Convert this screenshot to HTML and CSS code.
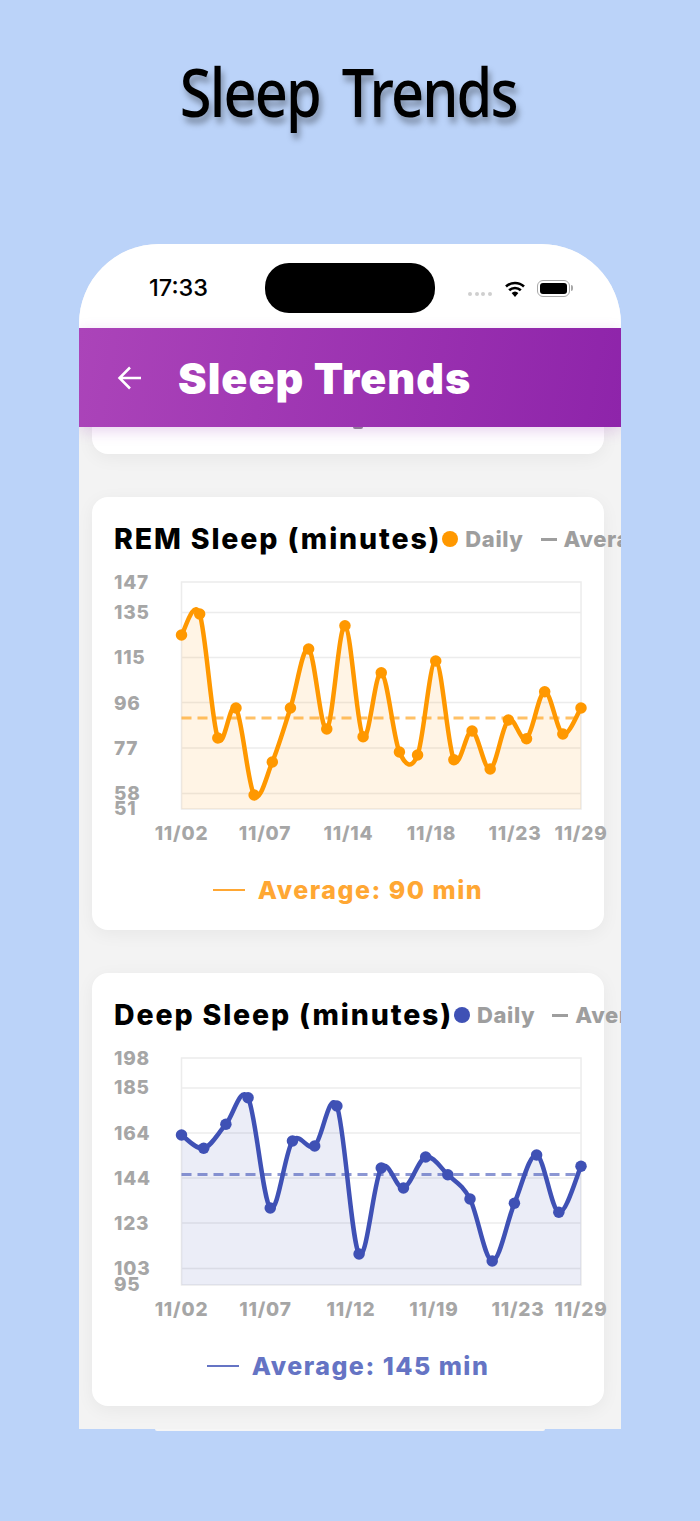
FILE: index.html
```html
<!DOCTYPE html>
<html lang="en">
<head>
<meta charset="utf-8">
<title>Sleep Trends</title>
<link rel="stylesheet" href="styles.css">
</head>
<body>
<h1 class="hero">Sleep Trends</h1>
<main class="phone">
  <div class="status">
    <span class="time">17:33</span>
    <span class="island"></span>
    <div class="status-icons">
      <span class="signal"><i></i><i></i><i></i><i></i></span>
      <svg class="wifi" width="22" height="17" viewBox="0 0 22 17"><path d="M11 17l-3.4-4a5 5 0 0 1 6.800 0z" fill="#000"/><path d="M5.200 10.300a8.400 8.400 0 0 1 11.600 0M2 6.500a13.200 13.200 0 0 1 18 0" fill="none" stroke="#000" stroke-width="2.600"/></svg>
      <span class="battery"><span class="battery-fill"></span></span>
    </div>
  </div>
  <header class="appbar">
    <svg class="back" width="26" height="26" viewBox="0 0 26 26"><path d="M24 13H3M13 2.500L2.500 13 13 23.500" fill="none" stroke="#fff" stroke-width="2.500"/></svg>
    <span class="appbar-title">Sleep Trends</span>
  </header>
  <div class="content">
    <section class="card card-cut"><span class="peek"></span></section>
    <section class="card">
      <div class="card-head">
        <h2 class="card-title">REM Sleep (minutes)</h2>
        <span class="dot dot-orange"></span><span class="legend">Daily</span>
        <span class="dash"></span><span class="legend">Average</span>
      </div>
      <svg class="chart" id="rem" width="512" height="270" viewBox="0 0 512 270"></svg>
      <div class="avg avg-orange"><span class="avg-line"></span>Average: 90 min</div>
    </section>
    <section class="card">
      <div class="card-head">
        <h2 class="card-title">Deep Sleep (minutes)</h2>
        <span class="dot dot-indigo"></span><span class="legend">Daily</span>
        <span class="dash"></span><span class="legend">Average</span>
      </div>
      <svg class="chart" id="deep" width="512" height="270" viewBox="0 0 512 270"></svg>
      <div class="avg avg-indigo"><span class="avg-line"></span>Average: 145 min</div>
    </section>
  </div>
</main>
<script src="charts.js"></script>
</body>
</html>
```
FILE: styles.css
```css
* { box-sizing: border-box; }
html, body { margin: 0; padding: 0; }
body {
  width: 700px;
  height: 1521px;
  overflow: hidden;
  background: #bbd3f9;
  font-family: Inter, "Liberation Sans", sans-serif;
}
.hero {
  height: 244px;
  margin: 0;
  padding: 49px 4px 0 0;
  font-family: "Noto Sans", sans-serif;
  font-size: 68px;
  line-height: 84px;
  font-weight: 500;
  letter-spacing: -2.200px;
  word-spacing: 10px;
  text-align: center;
  color: #000;
  white-space: nowrap;
  transform: scaleX(.85);
  text-shadow: 3px 6px 7px rgba(0,0,0,.35);
}
.phone {
  position: relative;
  width: 542px;
  height: 1187px;
  margin: 0 auto;
  background: linear-gradient(#f3f3f3 calc(100% - 2px), transparent 0);
  border-radius: 80px 80px 0 0;
  overflow: hidden;
}
.phone::after {
  content: "";
  position: absolute;
  left: 76px;
  right: 76px;
  bottom: 0;
  height: 2px;
  border-radius: 0 0 8px 8px;
  background: #f6f6f6;
}
.status {
  position: relative;
  height: 84px;
  background: #fff;
}
.time {
  position: absolute;
  left: 70px;
  top: 30px;
  font-size: 23.500px;
  line-height: 28px;
  font-weight: 500;
  color: #000;
}
.island {
  position: absolute;
  left: 186px;
  top: 19px;
  width: 170px;
  height: 50px;
  border-radius: 24px;
  background: #000;
}
.status-icons {
  position: absolute;
  left: 389px;
  top: 36px;
  display: flex;
  align-items: flex-start;
}
.signal {
  display: flex;
  gap: 2.600px;
  margin-top: 12px;
  margin-right: 12px;
}
.signal i {
  display: block;
  width: 4px;
  height: 4px;
  border-radius: 2px;
  background: #cfcfcf;
}
.wifi { margin-right: 11px; }
.battery {
  position: relative;
  display: block;
  width: 33px;
  height: 17px;
  padding: 2px;
  border: 1.500px solid #a8a8a8;
  border-radius: 6px;
}
.battery::after {
  content: "";
  position: absolute;
  right: -4px;
  top: 4px;
  width: 2px;
  height: 6px;
  border-radius: 0 2px 2px 0;
  background: #a8a8a8;
}
.battery-fill {
  display: block;
  height: 100%;
  border-radius: 3px;
  background: #000;
}
.appbar {
  position: relative;
  z-index: 2;
  display: flex;
  align-items: center;
  height: 99px;
  padding-left: 38px;
  background: linear-gradient(100deg, #ab44b9 0%, #8e24aa 100%);
  box-shadow: 0 4px 14px rgba(142,36,170,.2);
}
.back { flex: none; }
.appbar-title {
  margin-left: 35px;
  padding-top: 1px;
  font-size: 43px;
  line-height: 50px;
  font-weight: 900;
  letter-spacing: 1px;
  color: #fff;
}
.content {
  display: flex;
  flex-direction: column;
  gap: 43px;
  padding: 0 17px 0 13px;
}
.card {
  position: relative;
  flex: none;
  width: 512px;
  height: 433px;
  background: #fff;
  border-radius: 16px;
  box-shadow: 0 4px 18px rgba(0,0,0,.05);
}
.card-cut {
  height: 27px;
  border-radius: 0 0 16px 16px;
}
.peek {
  position: absolute;
  left: 261px;
  top: 0;
  width: 10px;
  height: 2px;
  border-radius: 0 0 5px 5px;
  background: #8f8596;
}
.card-head {
  display: flex;
  align-items: center;
  height: 75px;
  padding: 9px 0 0 22px;
  white-space: nowrap;
}
.card-title {
  margin: 0;
  flex: none;
  font-size: 28.500px;
  line-height: 34px;
  font-weight: 800;
  letter-spacing: 1.850px;
  color: #000;
}
.dot {
  flex: none;
  width: 16px;
  height: 16px;
  margin-left: 1px;
  border-radius: 50%;
}
.dot-orange { background: #ff9800; }
.dot-indigo { background: #3f51b5; }
.legend {
  flex: none;
  margin-left: 7px;
  font-size: 22px;
  line-height: 28px;
  font-weight: 800;
  letter-spacing: .6px;
  color: #9e9e9e;
}
.dash {
  flex: none;
  width: 16px;
  height: 3px;
  margin-left: 17px;
  background: #9e9e9e;
}
.chart {
  display: block;
  overflow: visible;
}
.grid { stroke: #ececec; stroke-width: 1.500; fill: none; }
.axis-label {
  font-family: Inter, "Liberation Sans", sans-serif;
  font-size: 19px;
  font-weight: 800;
  letter-spacing: .8px;
  fill: #a6a6a6;
}
.avg {
  display: flex;
  align-items: center;
  justify-content: center;
  height: 42px;
  margin-top: 27px;
  font-size: 25px;
  line-height: 30px;
  font-weight: 800;
  letter-spacing: 1.500px;
  white-space: nowrap;
}
.avg-line {
  width: 32px;
  height: 2px;
  margin-right: 13px;
  background: currentColor;
}
.avg-orange { color: #ffa733; }
.avg-indigo { color: #6574c4; }
```
FILE: charts.js
```js
var NS = 'http://www.w3.org/2000/svg';
var LEFT = 89.5, RIGHT = 489, TOP = 10, BOTTOM = 237;

function add(svg, name, attrs, text) {
  var el = document.createElementNS(NS, name);
  for (var key in attrs) el.setAttribute(key, attrs[key]);
  if (text) el.textContent = text;
  svg.appendChild(el);
  return el;
}

function spline(p) {
  var d = 'M' + p[0][0] + ' ' + p[0][1];
  for (var i = 0; i < p.length - 1; i++) {
    var a = p[Math.max(i - 1, 0)], b = p[i], c = p[i + 1], e = p[Math.min(i + 2, p.length - 1)];
    d += 'C' + (b[0] + (c[0] - a[0]) / 6).toFixed(2) + ' ' + (b[1] + (c[1] - a[1]) / 6).toFixed(2) +
      ' ' + (c[0] - (e[0] - b[0]) / 6).toFixed(2) + ' ' + (c[1] - (e[1] - b[1]) / 6).toFixed(2) +
      ' ' + c[0] + ' ' + c[1];
  }
  return d;
}

function draw(cfg) {
  var svg = document.getElementById(cfg.id);
  add(svg, 'rect', { x: LEFT, y: TOP, width: RIGHT - LEFT, height: BOTTOM - TOP, 'class': 'grid' });
  cfg.yLabels.forEach(function (l) {
    if (l[2]) add(svg, 'line', { x1: LEFT, x2: RIGHT, y1: l[1], y2: l[1], 'class': 'grid' });
    add(svg, 'text', { x: 22, y: (l[3] || l[1]) + 7, 'class': 'axis-label' }, l[0]);
  });
  cfg.xLabels.forEach(function (l) {
    add(svg, 'text', { x: l[1], y: 268, 'text-anchor': 'middle', 'class': 'axis-label' }, l[0]);
  });
  var step = (RIGHT - LEFT) / (cfg.y.length - 1);
  var pts = cfg.y.map(function (y, i) { return [+(LEFT + i * step).toFixed(2), y]; });
  var d = spline(pts);
  add(svg, 'path', { d: d + 'L' + RIGHT + ' ' + BOTTOM + 'L' + LEFT + ' ' + BOTTOM + 'Z', fill: cfg.color, 'fill-opacity': .1 });
  add(svg, 'line', { x1: LEFT, x2: RIGHT, y1: cfg.avg, y2: cfg.avg, stroke: cfg.color, 'stroke-opacity': .6, 'stroke-width': 3, 'stroke-dasharray': '10 6' });
  add(svg, 'path', { d: d, fill: 'none', stroke: cfg.color, 'stroke-width': 4.5 });
  pts.forEach(function (p) { add(svg, 'circle', { cx: p[0], cy: p[1], r: 5.75, fill: cfg.color }); });
}

/* y values are plot positions in the chart's own pixel space (page y minus 572 or 1048) */
function shift(list, by) { return list.map(function (v) { return v - by; }); }

draw({
  id: 'rem', color: '#ff9800', avg: 146,
  yLabels: [['147', 10], ['135', 40.500, 1, 39.500], ['115', 85.500, 1, 85], ['96', 130.500, 1], ['77', 176, 1], ['58', 221.500, 1, 220.500], ['51', 236]],
  xLabels: [['11/02', 89.500], ['11/07', 173], ['11/14', 256.500], ['11/18', 339.500], ['11/23', 423], ['11/29', 489]],
  y: shift([635, 614, 738, 708, 795, 762, 708, 649, 729, 625.700, 736.700, 672.700, 752, 755, 661, 759.700, 731, 769, 720, 738.700, 691.700, 734, 708], 572)
});

draw({
  id: 'deep', color: '#3f51b5', avg: 126.500,
  yLabels: [['198', 10], ['185', 40, 1, 39], ['164', 85, 1, 84.500], ['144', 130, 1], ['123', 175, 1], ['103', 220.500, 1, 219.500], ['95', 236]],
  xLabels: [['11/02', 89.500], ['11/07', 173.500], ['11/12', 259], ['11/19', 342], ['11/23', 426], ['11/29', 489]],
  y: shift([1135, 1148.300, 1124.300, 1097.700, 1208, 1141, 1146, 1106, 1254, 1168, 1188, 1157, 1174.700, 1199, 1261, 1203.300, 1155, 1212.300, 1166.300], 1048)
});
```
